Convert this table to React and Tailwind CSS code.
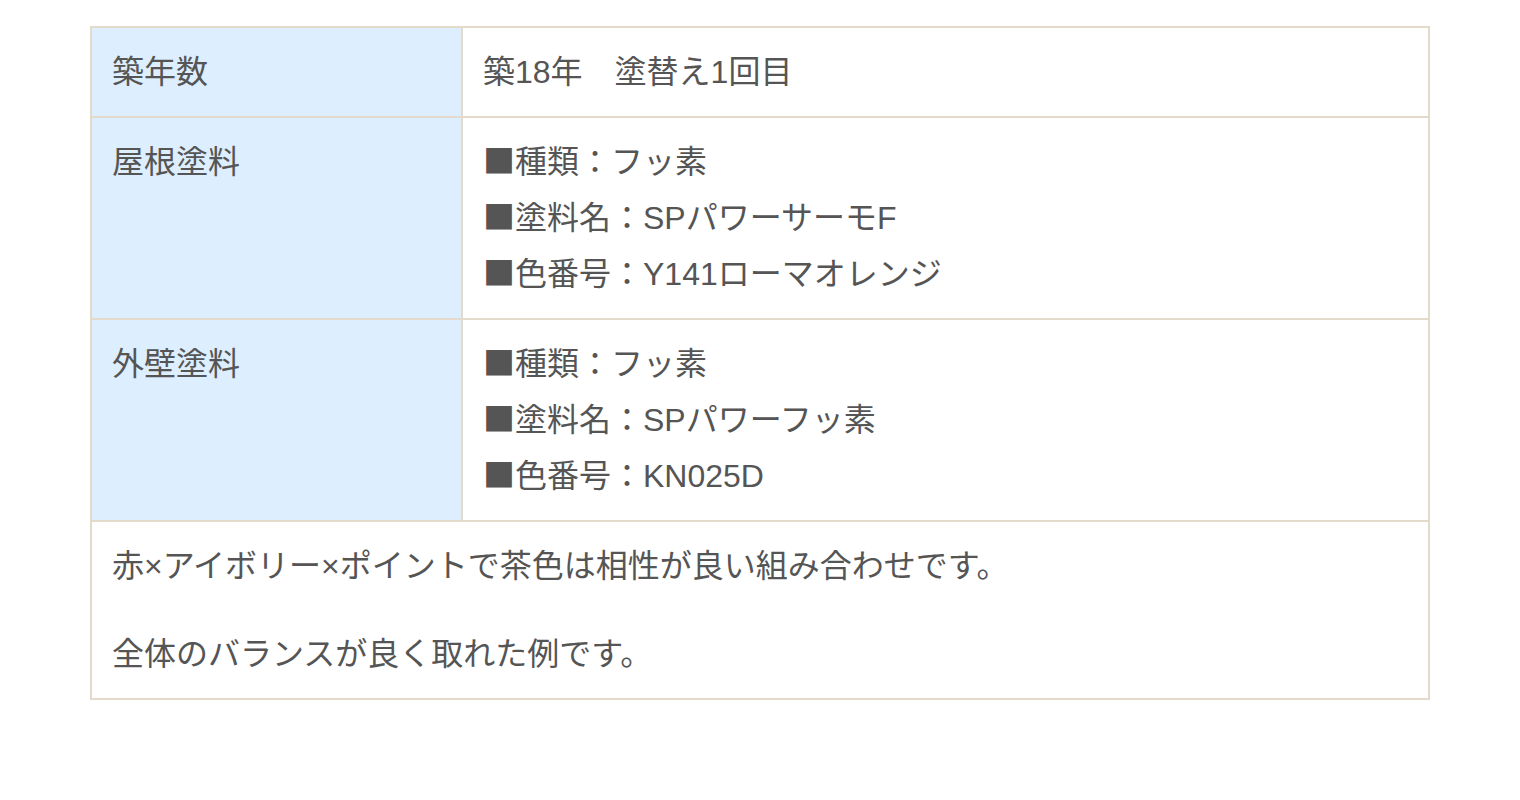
const rows = [
  { label: "築年数", lines: [["", "築18年　塗替え1回目"]] },
  {
    label: "屋根塗料",
    lines: [
      ["■", "種類：フッ素"],
      ["■", "塗料名：SPパワーサーモF"],
      ["■", "色番号：Y141ローマオレンジ"]
    ]
  },
  {
    label: "外壁塗料",
    lines: [
      ["■", "種類：フッ素"],
      ["■", "塗料名：SPパワーフッ素"],
      ["■", "色番号：KN025D"]
    ]
  }
];

const App = () => {
  return (
    <div
      className="min-h-[800px] bg-white px-[90px] pt-[26px] text-[32px] leading-[56px] text-[#555555]"
      style={{ fontFamily: '"Liberation Sans", "Noto Sans CJK JP", sans-serif' }}
    >
      <table className="w-full border-collapse border-2 border-[#e3dacb]">
        <tbody>
          {rows.map((row) => (
            <tr key={row.label}>
              <th className="w-[371px] border-2 border-[#e3dacb] bg-[#ddeeff] px-5 py-4 text-left align-top font-normal">
                <div className="h-[56px]">{row.label}</div>
              </th>
              <td className="border-2 border-[#e3dacb] px-5 py-4 align-top">
                {row.lines.map(([mark, text], i) => (
                  <div key={i} className="h-[56px] whitespace-nowrap">
                    {mark && (
                      <span
                        className="leading-none"
                        style={{ fontFamily: '"Noto Sans CJK JP", sans-serif' }}
                      >
                        {mark}
                      </span>
                    )}
                    {text}
                  </div>
                ))}
              </td>
            </tr>
          ))}
          <tr>
            <td colSpan={2} className="border-2 border-[#e3dacb] px-5 py-4">
              <p className="h-[56px]">赤×アイボリー×ポイントで茶色は相性が良い組み合わせです。</p>
              <p className="mt-8 h-[56px]">全体のバランスが良く取れた例です。</p>
            </td>
          </tr>
        </tbody>
      </table>
    </div>
  );
};

export default App;
